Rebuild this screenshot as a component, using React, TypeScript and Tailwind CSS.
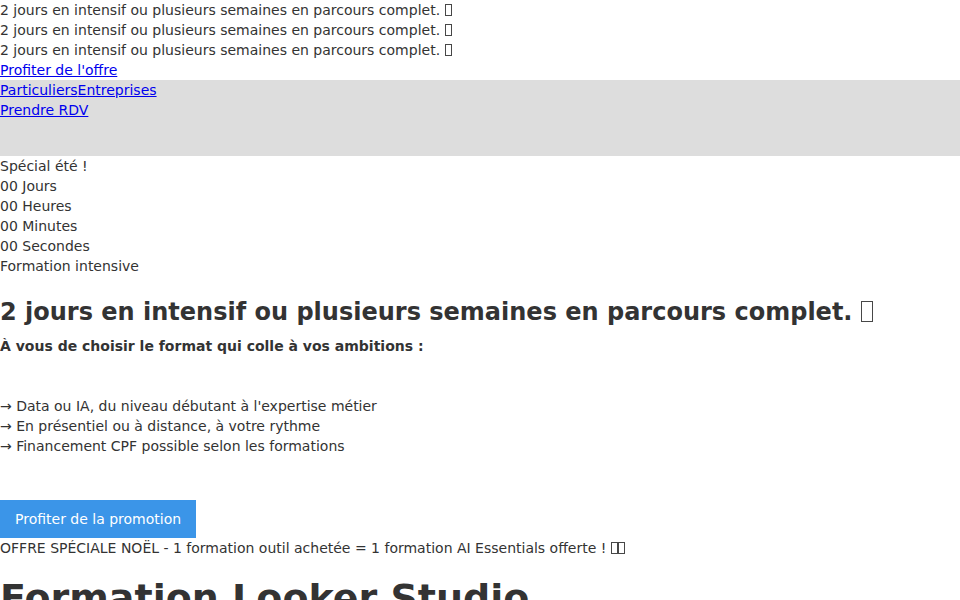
import React from 'react';

// glyph manquant (emoji sans police) : petit rectangle vide
function Tofu() {
  return (
    <span className="inline-block h-[0.9em] w-[0.52em] border border-current align-[-0.1em] opacity-90" />
  );
}

function Tagline() {
  return (
    <>
      2 jours en intensif ou plusieurs semaines en parcours complet. <Tofu />
    </>
  );
}

const countdown = ['00 Jours', '00 Heures', '00 Minutes', '00 Secondes'];

const points = [
  "→ Data ou IA, du niveau débutant à l'expertise métier",
  '→ En présentiel ou à distance, à votre rythme',
  '→ Financement CPF possible selon les formations',
];

export default function App() {
  return (
    <div className="min-h-[600px] bg-white text-[14px] leading-[20px] text-[#333] [font-family:'DejaVu_Sans',sans-serif]">
      {/* Bandeau défilant */}
      <div>
        <div><Tagline /></div>
        <div><Tagline /></div>
        <div><Tagline /></div>
      </div>
      <a href="#" className="block w-fit text-[#0000ee] underline">Profiter de l'offre</a>

      {/* Navigation */}
      <nav className="h-[76px] bg-[#dddddd]">
        <div>
          <a href="#" className="text-[#0000ee] underline">Particuliers</a>
          <a href="#" className="text-[#0000ee] underline">Entreprises</a>
        </div>
        <a href="#" className="text-[#0000ee] underline">Prendre RDV</a>
      </nav>

      {/* Promo */}
      <section>
        <div>Spécial été !</div>
        {countdown.map((c) => (
          <div key={c}>{c}</div>
        ))}
        <div>Formation intensive</div>

        <h2 className="mt-[18px] text-[24px] leading-[36px] font-bold"><Tagline /></h2>
        <p className="mt-[6px] font-bold">À vous de choisir le format qui colle à vos ambitions :</p>
        <div className="mt-[40px]">
          {points.map((p) => (
            <div key={p}>{p}</div>
          ))}
        </div>
        <a href="#" className="mt-[44px] block w-fit whitespace-nowrap bg-[#3b95e8] px-[15px] py-[9px] text-white">
          Profiter de la promotion
        </a>
        <div>
          OFFRE SPÉCIALE NOËL - 1 formation outil achetée = 1 formation AI Essentials offerte ! <Tofu /><Tofu />
        </div>
      </section>

      <h1 className="mt-[17px] text-[38px] leading-[46px] font-bold">Formation Looker Studio</h1>
    </div>
  );
}
